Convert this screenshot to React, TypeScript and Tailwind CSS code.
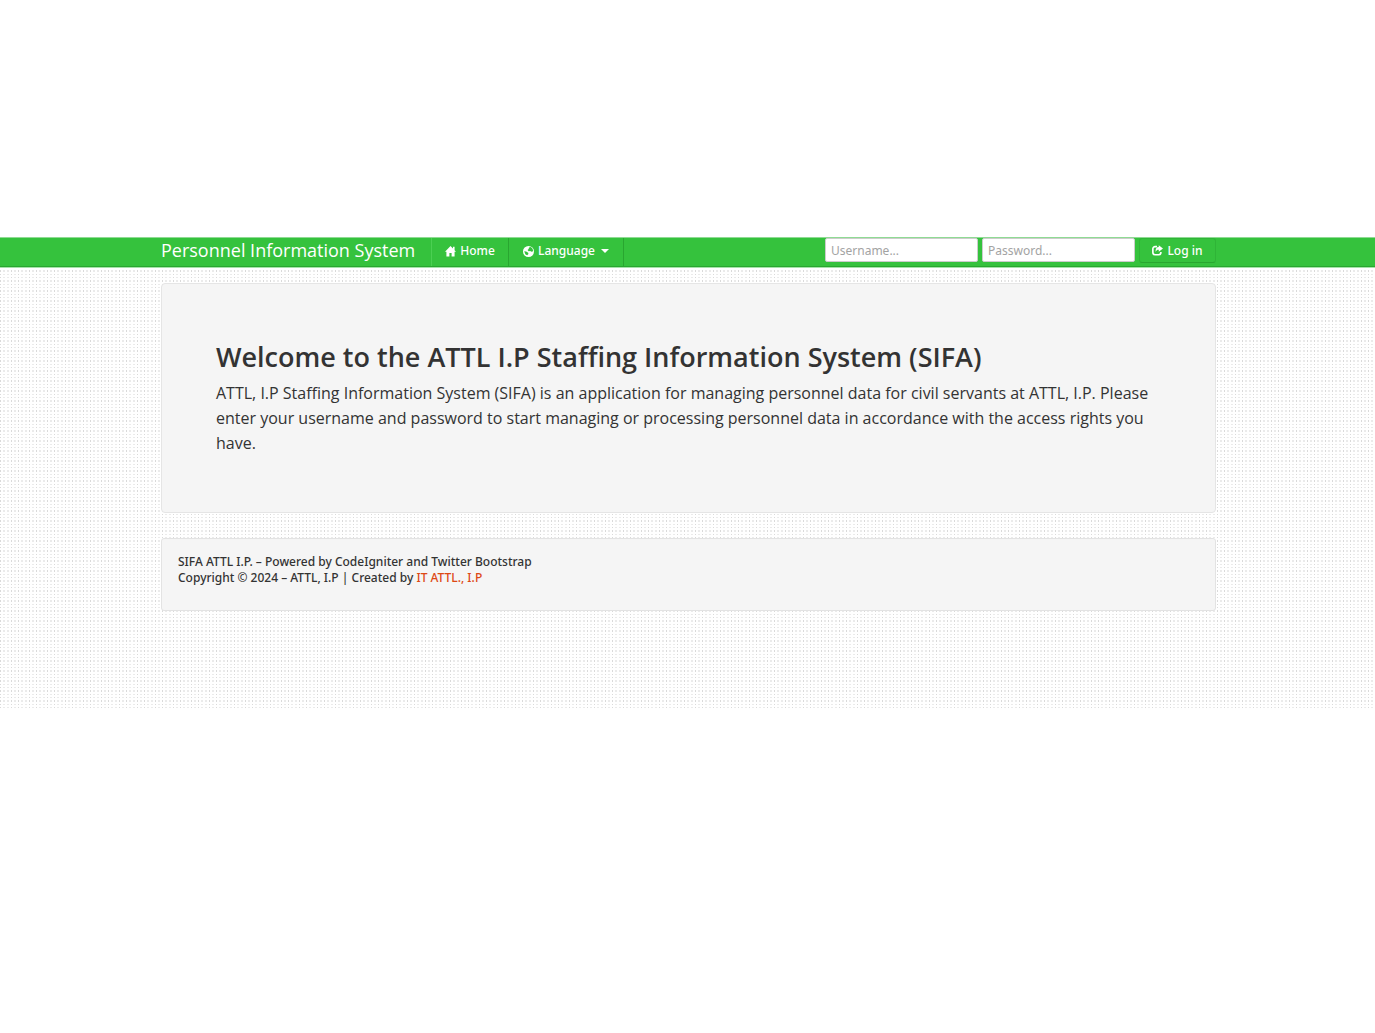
import { useState } from "react";

const container = "mx-auto w-full max-w-[1055px]";

const dots =
  "bg-white bg-[linear-gradient(to_bottom,transparent_0_1px,white_1px_3px,transparent_3px_5px,white_5px_7px,transparent_7px_8px,white_8px_10px),linear-gradient(to_right,#dadada_0_1px,white_1px_3px,#ebebeb_3px_5px,white_5px_7px,#ebebeb_7px_9px,white_9px_11px,#dadada_11px_12px,white_12px_14px,#ebebeb_14px_16px,white_16px_18px)] bg-[size:18px_10px]";

function HomeIcon() {
  return (
    <svg viewBox="0 0 14 14" className="size-[11px] shrink-0" fill="currentColor" aria-hidden="true">
      <path d="M7 0 0 7.3h1.8V13.4h3.8V9h2.8v4.4h3.8V7.3H14l-1.8-2V1h-2v2.2z" />
    </svg>
  );
}

function GlobeIcon() {
  return (
    <svg viewBox="0 0 14 14" className="size-[11px] shrink-0" aria-hidden="true">
      <circle cx="7" cy="7" r="7" fill="currentColor" />
      <path d="M7.6 1.8 10 1.4l2.2 2.2.7 3-2 .7-1.8-.9-1.9.4-1.4-1.6 1.4-1.4zM1.5 6.8l2.6.2 2.5 1.7.3 1.5-1.5 1.6-2.2-1z" fill="#35c23d" />
    </svg>
  );
}

function ShareIcon() {
  return (
    <svg viewBox="0 0 14 14" className="size-[11px] shrink-0" fill="none" stroke="currentColor" aria-hidden="true">
      <path d="M6.4 2H4A2.9 2.9 0 0 0 1.1 4.9v4.6A2.9 2.9 0 0 0 4 12.4h4.4a2.9 2.9 0 0 0 2.9-2.9V8.8" strokeWidth="2.1" />
      <path d="M8.6.2 14 4.4 8.6 8.6V6.2C6.6 6.2 5.4 7 4.6 9 4.2 5 6 2.8 8.6 2.7z" fill="currentColor" stroke="none" />
    </svg>
  );
}

const inputClass =
  "h-6 w-[153px] rounded-[2px] border border-[#ccc] bg-white px-[5px] font-['Noto_Sans',sans-serif] text-[12px] text-[#555] outline-none placeholder:text-[#a3a3a3]";

export default function App() {
  const [username, setUsername] = useState("");
  const [password, setPassword] = useState("");

  return (
    <div className="min-h-screen bg-white py-[237px] font-['Open_Sans','Noto_Sans',sans-serif] text-[#333]">
      <div className={`min-h-[472px] ${dots}`}>
        <nav className="border-t border-b border-t-[#8fdb93] border-b-[#29a630] bg-[#35c23d] pl-[2px] text-white shadow-[0_1px_0_#a5e3a9]">
          <div className={`${container} flex h-7 items-stretch`}>
            <a href="#" className="flex w-[270px] items-center pb-1 whitespace-nowrap text-[18px]">
              Personnel Information System
            </a>
            <a href="#" className="flex w-[78px] items-center justify-center gap-1 border-r border-l border-r-[#29a630] border-l-[#4bcf52] pb-0.5 font-['Noto_Sans',sans-serif] text-[12px] font-medium">
              <HomeIcon />
              Home
            </a>
            <button type="button" className="flex w-[115px] items-center justify-center gap-1 border-r border-[#29a630] pb-0.5 font-['Noto_Sans',sans-serif] text-[12px] font-medium">
              <GlobeIcon />
              Language
              <span className="ml-0.5 border-x-[4px] border-t-[4px] border-x-transparent border-t-white" />
            </button>
            <form className="ml-auto flex items-start gap-1" onSubmit={(e) => e.preventDefault()}>
              <input aria-label="Username" placeholder="Username..." value={username} onChange={(e) => setUsername(e.target.value)} className={inputClass} />
              <input aria-label="Password" type="password" placeholder="Password..." value={password} onChange={(e) => setPassword(e.target.value)} className={inputClass} />
              <button type="submit" className="flex h-[25px] w-[77px] items-center justify-center gap-1 rounded-[3px] border border-[#2fb437] border-b-[#29a630] font-['Noto_Sans',sans-serif] text-[12px] font-medium">
                <ShareIcon />
                Log in
              </button>
            </form>
          </div>
        </nav>

        <div className="pl-[2px]">
          <main className={`${container} mt-4 rounded-[4px] border border-[#e5e5e5] bg-[#f5f5f5] px-[54px] pt-[57px] pb-14`}>
            <h1 className="text-[27px] leading-8 font-semibold">Welcome to the ATTL I.P Staffing Information System (SIFA)</h1>
            <p className="mt-2 text-[16px] leading-[25px]">
              ATTL, I.P Staffing Information System (SIFA) is an application for managing personnel data for civil servants at ATTL, I.P. Please enter your username and password to start managing or processing personnel data in accordance with the access rights you have.
            </p>
          </main>
          <footer className={`${container} mt-[25px] min-h-[73px] rounded-[3px] border border-[#e3e3e3] bg-[#f5f5f5] px-4 pt-[15px] font-['Noto_Sans',sans-serif] text-[12px] leading-4 font-medium`}>
            <p>SIFA ATTL I.P. – Powered by CodeIgniter and Twitter Bootstrap</p>
            <p>
              Copyright © 2024 – ATTL, I.P | Created by <a href="#" className="text-[#dd4814]">IT ATTL., I.P</a>
            </p>
          </footer>
        </div>
      </div>
    </div>
  );
}
